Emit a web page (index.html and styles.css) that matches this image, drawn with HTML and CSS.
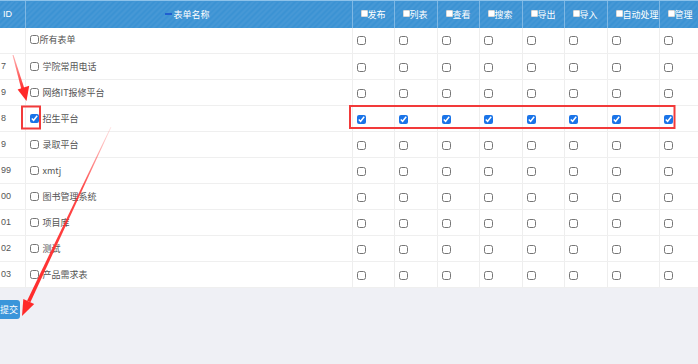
FILE: index.html
```html
<!DOCTYPE html>
<html lang="zh-CN">
<head>
<meta charset="utf-8">
<title>表单权限</title>
<link rel="stylesheet" href="styles.css">
</head>
<body>
<div class="page">
  <table class="grid">
    <colgroup>
      <col class="c-id"><col class="c-name"><col class="c-42"><col class="c-43"><col class="c-42"><col class="c-43"><col class="c-42"><col class="c-43"><col class="c-52"><col class="c-last">
    </colgroup>
    <thead>
      <tr>
        <th class="th-id">ID</th>
        <th class="th-name"><span class="sort-mark"></span>表单名称</th>
        <th class="th-perm"><span class="hbox"></span>发布</th>
        <th class="th-perm"><span class="hbox"></span>列表</th>
        <th class="th-perm"><span class="hbox"></span>查看</th>
        <th class="th-perm"><span class="hbox"></span>搜索</th>
        <th class="th-perm"><span class="hbox"></span>导出</th>
        <th class="th-perm"><span class="hbox"></span>导入</th>
        <th class="th-perm"><span class="hbox"></span>自动处理</th>
        <th class="th-perm"><span class="hbox"></span>管理</th>
      </tr>
    </thead>
    <tbody>
      <tr>
        <td class="td-id"></td>
        <td class="td-name"><label class="nm tight"><input type="checkbox">所有表单</label></td>
        <td><input type="checkbox"></td><td><input type="checkbox"></td><td><input type="checkbox"></td><td><input type="checkbox"></td><td><input type="checkbox"></td><td><input type="checkbox"></td><td><input type="checkbox"></td><td class="td-last"><input type="checkbox"></td>
      </tr>
      <tr>
        <td class="td-id">7</td>
        <td class="td-name"><label class="nm"><input type="checkbox">学院常用电话</label></td>
        <td><input type="checkbox"></td><td><input type="checkbox"></td><td><input type="checkbox"></td><td><input type="checkbox"></td><td><input type="checkbox"></td><td><input type="checkbox"></td><td><input type="checkbox"></td><td class="td-last"><input type="checkbox"></td>
      </tr>
      <tr>
        <td class="td-id">9</td>
        <td class="td-name"><label class="nm"><input type="checkbox">网络IT报修平台</label></td>
        <td><input type="checkbox"></td><td><input type="checkbox"></td><td><input type="checkbox"></td><td><input type="checkbox"></td><td><input type="checkbox"></td><td><input type="checkbox"></td><td><input type="checkbox"></td><td class="td-last"><input type="checkbox"></td>
      </tr>
      <tr>
        <td class="td-id">8</td>
        <td class="td-name"><label class="nm"><input type="checkbox" checked>招生平台</label></td>
        <td><input type="checkbox" checked></td><td><input type="checkbox" checked></td><td><input type="checkbox" checked></td><td><input type="checkbox" checked></td><td><input type="checkbox" checked></td><td><input type="checkbox" checked></td><td><input type="checkbox" checked></td><td class="td-last"><input type="checkbox" checked></td>
      </tr>
      <tr>
        <td class="td-id">9</td>
        <td class="td-name"><label class="nm"><input type="checkbox">录取平台</label></td>
        <td><input type="checkbox"></td><td><input type="checkbox"></td><td><input type="checkbox"></td><td><input type="checkbox"></td><td><input type="checkbox"></td><td><input type="checkbox"></td><td><input type="checkbox"></td><td class="td-last"><input type="checkbox"></td>
      </tr>
      <tr>
        <td class="td-id">99</td>
        <td class="td-name"><label class="nm"><input type="checkbox">xmtj</label></td>
        <td><input type="checkbox"></td><td><input type="checkbox"></td><td><input type="checkbox"></td><td><input type="checkbox"></td><td><input type="checkbox"></td><td><input type="checkbox"></td><td><input type="checkbox"></td><td class="td-last"><input type="checkbox"></td>
      </tr>
      <tr>
        <td class="td-id">00</td>
        <td class="td-name"><label class="nm"><input type="checkbox">图书管理系统</label></td>
        <td><input type="checkbox"></td><td><input type="checkbox"></td><td><input type="checkbox"></td><td><input type="checkbox"></td><td><input type="checkbox"></td><td><input type="checkbox"></td><td><input type="checkbox"></td><td class="td-last"><input type="checkbox"></td>
      </tr>
      <tr>
        <td class="td-id">01</td>
        <td class="td-name"><label class="nm"><input type="checkbox">项目库</label></td>
        <td><input type="checkbox"></td><td><input type="checkbox"></td><td><input type="checkbox"></td><td><input type="checkbox"></td><td><input type="checkbox"></td><td><input type="checkbox"></td><td><input type="checkbox"></td><td class="td-last"><input type="checkbox"></td>
      </tr>
      <tr>
        <td class="td-id">02</td>
        <td class="td-name"><label class="nm"><input type="checkbox">测试</label></td>
        <td><input type="checkbox"></td><td><input type="checkbox"></td><td><input type="checkbox"></td><td><input type="checkbox"></td><td><input type="checkbox"></td><td><input type="checkbox"></td><td><input type="checkbox"></td><td class="td-last"><input type="checkbox"></td>
      </tr>
      <tr>
        <td class="td-id">03</td>
        <td class="td-name"><label class="nm"><input type="checkbox">产品需求表</label></td>
        <td><input type="checkbox"></td><td><input type="checkbox"></td><td><input type="checkbox"></td><td><input type="checkbox"></td><td><input type="checkbox"></td><td><input type="checkbox"></td><td><input type="checkbox"></td><td class="td-last"><input type="checkbox"></td>
      </tr>
    </tbody>
  </table>
  <div class="actions"><button class="submit" type="button">提交</button></div>

  <svg class="annot" width="698" height="364" viewBox="0 0 698 364" xmlns="http://www.w3.org/2000/svg">
    <defs>
      <linearGradient id="g1" gradientUnits="userSpaceOnUse" x1="13" y1="55" x2="24" y2="90">
        <stop offset="0" stop-color="#ff3b3b" stop-opacity="0.4"/>
        <stop offset="1" stop-color="#ff2a2a" stop-opacity="1"/>
      </linearGradient>
      <linearGradient id="g2" gradientUnits="userSpaceOnUse" x1="111" y1="127" x2="30" y2="300">
        <stop offset="0" stop-color="#ff3b3b" stop-opacity="0.15"/>
        <stop offset="0.35" stop-color="#ff2a2a" stop-opacity="0.85"/>
        <stop offset="1" stop-color="#ff2a2a" stop-opacity="1"/>
      </linearGradient>
    </defs>
    <rect x="22" y="106.5" width="18" height="22" fill="none" stroke="#f23a3a" stroke-width="2"/>
    <rect x="350" y="106" width="324.5" height="22" fill="none" stroke="#f23a3a" stroke-width="2"/>
    <polygon points="12.5,55 13.5,55 24.4,88.4 21.4,89.4" fill="url(#g1)"/>
    <polygon points="26.5,101 17.6,89.4 29.2,85.8" fill="#ff2a2a"/>
    <polygon points="110.6,127 111.4,127 30.4,302.3 27.1,300.7" fill="url(#g2)"/>
    <polygon points="22,316 23.3,299 34.2,304" fill="#ff2a2a"/>
  </svg>
</div>
</body>
</html>
```

FILE: styles.css
```css
* { box-sizing: border-box; }

html, body {
  margin: 0;
  padding: 0;
}

body {
  background: #eff0f5;
  font-family: "Noto Sans CJK SC", "Noto Sans", "Liberation Sans", sans-serif;
  font-size: 9px;
  color: #555;
  width: 698px;
  height: 364px;
  overflow: hidden;
}

.page {
  position: relative;
  width: 698px;
  height: 364px;
}

.grid {
  width: 698px;
  table-layout: fixed;
  border-collapse: collapse;
  background: #fff;
}

.c-id { width: 25px; }
.c-name { width: 327px; }
.c-42 { width: 42px; }
.c-43 { width: 43px; }
.c-52 { width: 52px; }
.c-last { width: 39px; }

thead th {
  height: 27px;
  padding: 0;
  font-weight: normal;
  color: #fff;
  text-align: left;
  white-space: nowrap;
  border-top: 1px solid #8cc2ea;
  border-left: 1px solid #7fb8e4;
  background-color: #3b92d3;
  background-image: repeating-linear-gradient(135deg, rgba(255,255,255,0.06) 0 2px, rgba(0,0,0,0) 2px 4px);
  line-height: 1;
}

thead th:first-child { border-left: none; }

.th-id {
  padding-left: 3px !important;
  font-family: "Liberation Sans", "Noto Sans", sans-serif;
  font-size: 9px;
}

.th-name {
  text-align: center !important;
  padding-right: 2px !important;
}

.sort-mark {
  display: inline-block;
  width: 7px;
  height: 2px;
  background: #1f5fd1;
  vertical-align: middle;
  margin-right: 1px;
  position: relative;
  top: -1px;
}

.th-perm {
  padding-left: 8px !important;
}

.hbox {
  display: inline-block;
  width: 7px;
  height: 7px;
  background: #fff;
  border: 1px solid #d8d8d8;
  border-radius: 1px;
  vertical-align: middle;
  position: relative;
  top: -2px;
  margin-right: 0;
}

tbody td {
  height: 26px;
  padding: 0 0 0 4px;
  border-bottom: 1px solid #efefef;
  border-left: 1px solid #eeeeee;
  vertical-align: middle;
  white-space: nowrap;
  line-height: 1;
}

tbody td.td-id {
  border-left: none;
  padding-left: 1px;
  color: #555;
  font-family: "Liberation Sans", "Noto Sans", sans-serif;
}

tbody td.td-name { padding-left: 4px; }

.nm {
  display: inline-flex;
  align-items: center;
  gap: 4px;
  color: #555;
}

.nm.tight { gap: 1px; }

input[type="checkbox"] {
  width: 9px;
  height: 9px;
  margin: 0;
  vertical-align: middle;
  accent-color: #1a74e8;
}

.actions {
  padding-top: 12px;
}

.submit {
  display: block;
  margin-left: -8px;
  width: 28px;
  height: 19px;
  padding: 0 2px 0 8px;
  border: none;
  border-radius: 3px;
  background: #3a95da;
  color: #fff;
  font-family: "Noto Sans CJK SC", sans-serif;
  font-size: 9px;
  line-height: 19px;
  text-align: left;
  white-space: nowrap;
}

.annot {
  position: absolute;
  left: 0;
  top: 0;
  pointer-events: none;
}
```
